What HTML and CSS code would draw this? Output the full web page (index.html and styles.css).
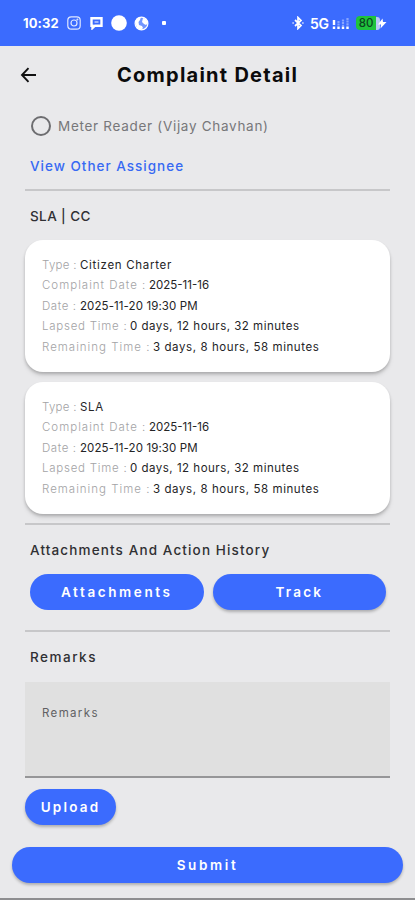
FILE: index.html
```html
<!DOCTYPE html>
<html lang="en">
<head>
<meta charset="utf-8">
<meta name="viewport" content="width=device-width, initial-scale=1">
<title>Complaint Detail</title>
<link rel="stylesheet" href="styles.css">
</head>
<body>
<header class="status">
  <span class="clock">10:32</span>
  <svg class="ic-insta" width="14" height="14" viewBox="0 0 14 14" fill="none" stroke="#dfe7ff" stroke-width="1.2"><rect x=".8" y=".8" width="12.4" height="12.4" rx="3.5"/><circle cx="7" cy="7" r="3"/><circle cx="10.4" cy="3.6" r=".4"/></svg>
  <svg class="ic-chat" width="13" height="14" viewBox="0 0 13 14"><path fill="none" stroke="#fff" stroke-width="2.4" d="M1.5 2.200h10v7.500H5L2.500 12V9.700h-1z"/><path d="M4.500 6h4" stroke="#fff"/></svg>
  <svg class="ic-dot" width="16" height="16" viewBox="0 0 16 16"><circle cx="8" cy="8" r="7.8" fill="#fff"/></svg>
  <svg class="ic-globe" width="15" height="15" viewBox="0 0 15 15"><circle cx="7.5" cy="7.500" r="6.400" fill="#7296ff" stroke="#fff" stroke-width="1.200"/><path fill="#fff" d="M1 6 3 2l4-1-1 3-1.500 2 .5 3 3 1 1 2-2 2L3 12zM9 2l3 1 2 4-2 2-2-1-2-2z"/></svg>
  <span class="more"></span>
  <span class="spacer"></span>
  <svg class="ic-bt" width="12" height="14" viewBox="0 0 12 14" fill="none" stroke="#fff" stroke-width="1.700"><path d="m3 4 6 5.500-3 3V1.500l3 3L3 10"/><path d="M.5 7h1.200M10.300 7h1.200"/></svg>
  <span class="net">5G</span>
  <svg class="ic-signal" width="18" height="13" viewBox="0 0 18 13"><path stroke="#fff" stroke-width="2.400" d="M2 3v5M2 9.500v2.500M6.500 9.500v2.500M11 9.500v2.500M15.500 9.500v2.500"/><path stroke="#86a4ff" stroke-width="2.200" stroke-dasharray="2 .6" d="M6.500 4v5M11 2.500V9M15.500 1v8"/></svg>
  <span class="battery">80</span>
  <svg class="ic-bolt" width="11" height="13" viewBox="0 0 11 13"><path fill="#b9c8f5" d="M0 0h1Q4 0 4 3v7q0 3-3 3H0z"/><path fill="#fff" d="M6.500 1.500 2 7.500h3L4.500 11.500l6-6.500H7z"/></svg>
</header>
<div class="titlebar">
  <svg class="back" width="18" height="18" viewBox="0 0 18 18" fill="none" stroke="#111" stroke-width="1.900"><path d="M16 9H2.500M8.500 2.200 2 9l6.500 6.800"/></svg>
  <h1>Complaint Detail</h1>
</div>
<main>
  <label class="option"><span class="radio"></span><span class="option-text">Meter Reader (Vijay Chavhan)</span></label>
  <a class="link">View Other Assignee</a>
  <hr class="rule">
  <h2 class="sla">SLA | CC</h2>
  <section class="card">
    <p><span class="k k-type">Type :</span><span class="v v-type">Citizen Charter</span></p>
    <p><span class="k k-complaint">Complaint Date :</span><span class="v v-complaint">2025-11-16</span></p>
    <p><span class="k k-date">Date :</span><span class="v v-date">2025-11-20 19:30 PM</span></p>
    <p><span class="k k-lapsed">Lapsed Time :</span><span class="v v-lapsed">0 days, 12 hours, 32 minutes</span></p>
    <p><span class="k k-remaining">Remaining Time :</span><span class="v v-remaining">3 days, 8 hours, 58 minutes</span></p>
  </section>
  <section class="card">
    <p><span class="k k-type">Type :</span><span class="v v-type">SLA</span></p>
    <p><span class="k k-complaint">Complaint Date :</span><span class="v v-complaint">2025-11-16</span></p>
    <p><span class="k k-date">Date :</span><span class="v v-date">2025-11-20 19:30 PM</span></p>
    <p><span class="k k-lapsed">Lapsed Time :</span><span class="v v-lapsed">0 days, 12 hours, 32 minutes</span></p>
    <p><span class="k k-remaining">Remaining Time :</span><span class="v v-remaining">3 days, 8 hours, 58 minutes</span></p>
  </section>
  <hr class="rule rule-cards">
  <h2 class="history">Attachments And Action History</h2>
  <div class="actions"><button class="btn flat attach">Attachments</button><button class="btn track">Track</button></div>
  <hr class="rule">
  <h2 class="remarks">Remarks</h2>
  <div class="field">Remarks</div>
  <button class="btn upload">Upload</button>
</main>
<button class="btn submit">Submit</button>
</body>
</html>
```

FILE: styles.css
```css
* { box-sizing: border-box; }
body {
  margin: 0;
  height: 900px;
  overflow: hidden;
  display: flex;
  flex-direction: column;
  background: #e9e9eb;
  border-bottom: 2px solid #8e8e90;
  font-family: Inter, "Liberation Sans", sans-serif;
  color: #222;
}
svg { display: block; flex: none; }
.status {
  height: 46px;
  flex: none;
  display: flex;
  align-items: center;
  padding: 0 28px 0 23px;
  background: #3b6bfe;
  color: #fff;
}
.clock { width: 44px; font-size: 13px; font-weight: 700; letter-spacing: 0.1px; }
.ic-chat { margin-left: 9px; }
.ic-dot { margin-left: 8px; }
.ic-globe { margin-left: 7px; }
.more { width: 4px; height: 4px; margin-left: 13px; border-radius: 1px; background: #fff; }
.spacer { flex: 1; }
.net { margin-left: 6px; width: 19px; font-size: 14px; font-weight: 600; letter-spacing: -0.4px; }
.ic-signal { margin-left: 3px; }
.battery {
  width: 20px;
  height: 14px;
  margin-left: 6px;
  border-radius: 4px 0 0 4px;
  background: #1fc33c;
  color: #0c4520;
  font-size: 11.5px;
  font-weight: 500;
  line-height: 14px;
  text-align: center;
}
.titlebar {
  height: 58px;
  flex: none;
  display: grid;
  grid-template-columns: 97px 1fr;
  align-items: center;
  padding: 0 0 1px 20px;
}
h1 { margin: 0; font-size: 20px; font-weight: 650; letter-spacing: 1.25px; color: #0b0b0c; white-space: nowrap; }
main { padding: 0 25px; display: flex; flex-direction: column; align-items: stretch; }
.option { height: 44px; display: flex; align-items: center; padding-left: 6px; }
.radio { width: 20px; height: 20px; border: 2px solid #6d6d70; border-radius: 50%; }
.option-text { margin-left: 7px; font-size: 13.5px; color: #77777a; letter-spacing: 0.7px; white-space: nowrap; }
.link { height: 41px; padding: 9px 5px 0; font-size: 13.5px; line-height: 18px; font-weight: 500; color: #3769f3; letter-spacing: 1px; }
.rule { width: 100%; height: 2px; margin: 0; border: 0; background: #c7c7c9; }
h2 { margin: 0; padding-left: 5px; font-size: 13.5px; font-weight: 500; line-height: 18px; color: #303033; }
.sla { margin: 16px 0 15px; letter-spacing: 0.4px; }
.card {
  height: 132px;
  margin-bottom: 10px;
  padding: 15px 17px;
  border-radius: 18px;
  background: #fff;
  box-shadow: 0 2px 3px rgba(0,0,0,.2), 0 4px 5px rgba(0,0,0,.08);
}
.card p { margin: 0; height: 20.4px; display: flex; font-size: 11.5px; line-height: 20.4px; white-space: nowrap; }
.k { color: #a3a3a5; font-weight: 300; }
.v { color: #242426; }
.k-type { width: 38px; letter-spacing: 0.3px; }
.k-complaint { width: 107px; letter-spacing: 1px; }
.k-date { width: 38px; letter-spacing: 0.6px; }
.k-lapsed { width: 88px; letter-spacing: 0.75px; }
.k-remaining { width: 111px; letter-spacing: 1px; }
.v-type { letter-spacing: 0.7px; }
.v-date { letter-spacing: 0.1px; }
.v-lapsed { letter-spacing: 0.5px; }
.v-remaining { letter-spacing: 0.58px; }
.rule-cards { margin-top: -1px; }
.history { margin: 16px 0 15px; font-size: 13.5px; letter-spacing: 1.13px; }
.actions { display: flex; gap: 9px; padding: 0 4px 0 5px; margin-bottom: 20px; }
.btn {
  height: 36px;
  padding: 0;
  border: 0;
  border-radius: 18px;
  background: #3b6bfe;
  color: #fff;
  font: 600 13.5px Inter, sans-serif;
  letter-spacing: 2.2px;
  box-shadow: 0 2px 3px rgba(0,0,0,.25);
}
.actions .btn { flex: 1; }
.actions .attach { box-shadow: none; letter-spacing: 2.6px; }
.remarks { margin: 16px 0 16px; letter-spacing: 1.5px; }
.field { height: 96px; padding: 22px 17px; border-bottom: 2px solid #969698; background: #e0e0e0; font-size: 11.5px; line-height: 18px; letter-spacing: 1.35px; color: #606063; }
.upload { width: 91px; margin-top: 11px; }
.submit { flex: none; height: 36px; margin: 22px 12px 0; letter-spacing: 2.6px; }
```
